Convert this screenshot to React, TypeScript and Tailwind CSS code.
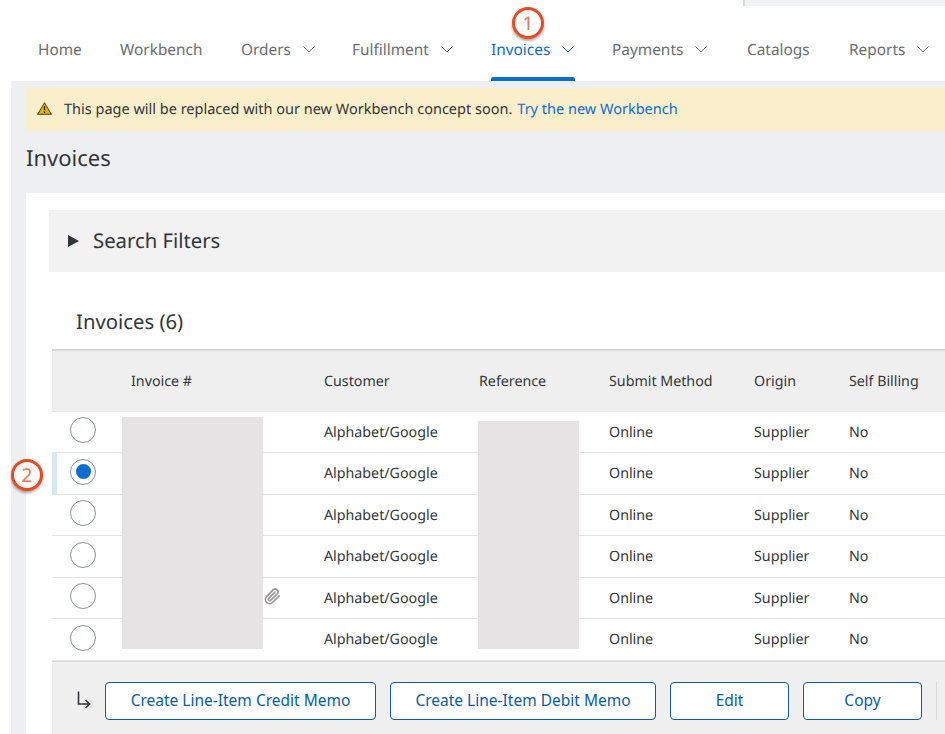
const font = { fontFamily: '"Noto Sans", "Liberation Sans", sans-serif' };

const navItems = [
  { label: 'Home', menu: false, width: 'w-[82px]' },
  { label: 'Workbench', menu: false, width: 'w-[121px]' },
  { label: 'Orders', menu: true, width: 'w-[111px]' },
  { label: 'Fulfillment', menu: true, width: 'w-[139px]' },
  { label: 'Invoices', menu: true, width: 'w-[121px]', active: true },
  { label: 'Payments', menu: true, width: 'w-[135px]' },
  { label: 'Catalogs', menu: false, width: 'w-[102px]' },
  { label: 'Reports', menu: true, width: 'w-[96px]' },
];

const columns = ['', 'Invoice #', 'Customer', 'Reference', 'Submit Method', 'Origin', 'Self Billing'];
const gridCols = 'grid grid-cols-[79px_193px_155px_130px_145px_95px_1fr]';

function Chevron({ className }: { className: string }) {
  return (
    <svg viewBox="0 0 12 7" className={className} fill="none" stroke="currentColor" strokeWidth="1">
      <path d="M0.5 0.5 L6 6 L11.5 0.5" />
    </svg>
  );
}

function Marker({ n, className }: { n: number; className: string }) {
  return (
    <div className={`absolute flex h-[32px] w-[32px] items-center justify-center rounded-full border-[3px] border-[#f0481e] bg-white text-[19px] text-[#f4714f] shadow-[0_2px_3px_rgba(0,0,0,0.35)] ${className}`}>
      {n}
    </div>
  );
}

function Row({ selected, clip }: { selected?: boolean; clip?: boolean }) {
  return (
    <div className={`${gridCols} relative h-[41.5px] items-center border-b border-[#e5e5e5] bg-white text-[14.25px] text-[#32363a]`}>
      {selected && <div className="absolute bottom-0 left-0 top-0 w-[5px] bg-[#d7e8f8]" />}
      <div className="pb-[3px] pl-[18px]">
        <div className="flex h-[26px] w-[26px] items-center justify-center rounded-full border border-[#89919a] bg-white">
          {selected && <div className="h-[15px] w-[15px] rounded-full bg-[#0a6ed1]" />}
        </div>
      </div>
      <div className="pb-[2px] pl-[133px]">
        {clip && (
          <svg viewBox="0 0 24 24" className="h-[17px] w-[17px]" fill="none" stroke="#9a9a9a" strokeWidth="2.4" strokeLinecap="round" strokeLinejoin="round">
            <path d="M21.4 11.1 12.2 20.3a6 6 0 0 1-8.5-8.5l9.2-9.2a4 4 0 0 1 5.7 5.7l-9.2 9.2a2 2 0 0 1-2.8-2.8l8.5-8.5" />
          </svg>
        )}
      </div>
      <div className="pt-[1px]">Alphabet/Google</div>
      <div />
      <div className="pt-[1px]">Online</div>
      <div className="pt-[1px]">Supplier</div>
      <div className="pt-[1px]">No</div>
    </div>
  );
}

function ActionButton({ label, width }: { label: string; width: string }) {
  return (
    <button className={`h-[38px] shrink-0 rounded-[4px] border border-[#0a5ca8] bg-white text-[15.5px] text-[#0a5ca8] ${width}`}>
      {label}
    </button>
  );
}

export default function App() {
  return (
    <div style={font} className="relative h-[734px] w-[945px] overflow-hidden bg-white [text-rendering:geometricPrecision]">
      {/* top of the window behind the nav */}
      <div className="flex h-[6px] justify-end">
        <div className="w-[202px] border-l-2 border-[#d9d9d9] bg-[#f1f2f3]" />
      </div>

      <nav className="flex h-[75px] pl-[38px]">
        {navItems.map(item => (
          <div key={item.label} className={`${item.width} shrink-0`}>
            <div className={`relative flex h-full items-center gap-[12px] pt-[12px] text-[15.4px] ${item.active ? 'w-[84px] text-[#0a6ed1]' : 'text-[#6a6d70]'}`}>
              <span>{item.label}</span>
              {item.menu && <Chevron className="h-[7px] w-[12px]" />}
              {item.active && <div className="absolute bottom-0 left-0 right-0 h-[4px] rounded-t-[2px] bg-[#0a6ed1]" />}
            </div>
          </div>
        ))}
      </nav>

      <main className="ml-[11px] h-[653px] bg-[#edeff1] pl-[15px] pt-[7px]">
        <div className="flex h-[43px] items-center bg-[#fbeecb] pl-[11px] text-[14.5px] text-[#32363a]">
          <svg viewBox="0 0 16 14" className="mb-[2px] h-[13px] w-[15px]">
            <path d="M8 0.8 L15.4 13.2 L0.6 13.2 Z" fill="#e9b100" stroke="#3a3200" strokeWidth="1" strokeLinejoin="round" />
            <path d="M8 4.5 V9 M8 10.3 V11.8" stroke="#222" strokeWidth="1.5" />
          </svg>
          <span className="ml-[12px]">This page will be replaced with our new Workbench concept soon.</span>
          <span className="ml-[5px] text-[#0a6ed1]">Try the new Workbench</span>
        </div>

        <h1 className="flex h-[62px] items-center pb-[8px] text-[22px] font-normal text-[#32363a]">Invoices</h1>

        <section className="h-[541px] bg-white pl-[24px] pt-[17px]">
          <div className="-ml-[1px] flex h-[62px] items-center gap-[14px] bg-[#f2f2f2] pl-[19px] text-[20.3px] text-[#32363a]">
            <div className="h-0 w-0 border-y-[6px] border-l-[11px] border-y-transparent border-l-[#32363a]" />
            <span className="pb-[2px]">Search Filters</span>
          </div>

          <div className="ml-[2px]">
            <h2 className="flex h-[77px] items-center pl-[24px] pt-[21px] text-[20.3px] font-normal text-[#32363a]">Invoices (6)</h2>

            <div className="relative">
              <div className={`${gridCols} h-[62.5px] items-center border-y-2 border-b-[1px] border-t-[#d6d6d6] border-b-[#e5e5e5] bg-[#efefef] text-[14.25px] text-[#32363a]`}>
                {columns.map((c, i) => (
                  <div key={i} className="pt-[1px]">{c}</div>
                ))}
              </div>
              <Row />
              <Row selected />
              <Row />
              <Row />
              <Row clip />
              <Row />

              {/* blocked out values */}
              <div className="absolute left-[69.5px] top-[68px] h-[232px] w-[141px] bg-[#e5e3e4]" />
              <div className="absolute left-[426px] top-[72px] h-[228px] w-[101px] bg-[#e5e3e4]" />
            </div>

            <div className="flex h-[74px] items-center gap-[14px] border-t border-[#d9d9d9] bg-[#f0f0f0] pl-[25px] pt-[6px]">
              <svg viewBox="0 0 14 18" className="mb-[3px] h-[18px] w-[14px]" fill="none" stroke="#32363a" strokeWidth="1.6">
                <path d="M1.5 0.5 V13 H12.5 M8.5 9 L12.5 13 L8.5 17" />
              </svg>
              <ActionButton label="Create Line-Item Credit Memo" width="w-[271px]" />
              <ActionButton label="Create Line-Item Debit Memo" width="w-[266px]" />
              <ActionButton label="Edit" width="w-[119px]" />
              <ActionButton label="Copy" width="w-[119px]" />
              <div className="h-[38px] w-px shrink-0 bg-[#d9d9d9]" />
            </div>
          </div>
        </section>
      </main>

      <Marker n={1} className="left-[512px] top-[7px]" />
      <Marker n={2} className="left-[11px] top-[459px]" />
    </div>
  );
}
